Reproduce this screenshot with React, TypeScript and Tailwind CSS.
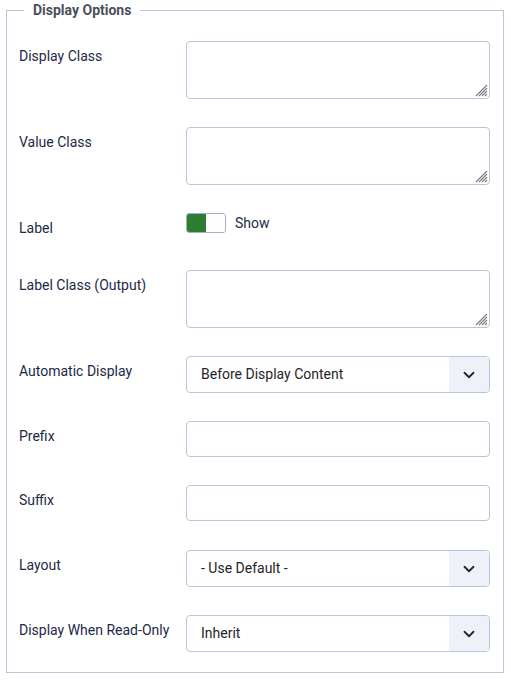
import { ChevronDown } from 'lucide-react';

const labelCls = 'w-[167px] shrink-0 pt-[5px] text-[14px] leading-[21px] text-[#1c2a47]';
const boxCls = 'w-[304px] rounded-[4px] border border-[#b8c6dd] bg-white';

function TextRow({ label }: { label: string }) {
  return (
    <div className="flex">
      <div className={labelCls}>{label}</div>
      <div className="relative">
        <textarea className={`${boxCls} block h-[58px] resize-none outline-none`} />
        {/* resize grip */}
        <svg className="pointer-events-none absolute bottom-[2px] right-[2px]" width="13" height="13" viewBox="0 0 13 13">
          <g stroke="#7a7a7a" strokeWidth="1.1">
            <line x1="12" y1="1" x2="1" y2="12" />
            <line x1="12" y1="4" x2="4" y2="12" />
            <line x1="12" y1="7" x2="7" y2="12" />
            <line x1="12" y1="10" x2="10" y2="12" />
          </g>
        </svg>
      </div>
    </div>
  );
}

function InputRow({ label }: { label: string }) {
  return (
    <div className="flex">
      <div className={labelCls}>{label}</div>
      <input className={`${boxCls} h-[36px] outline-none`} />
    </div>
  );
}

function SelectRow({ label, value }: { label: string; value: string }) {
  return (
    <div className="flex">
      <div className={labelCls}>{label}</div>
      <div className={`${boxCls} flex h-[37px] overflow-hidden`}>
        <div className="flex flex-1 items-center pl-[14px] text-[14px] text-[#22252a]">{value}</div>
        <div className="flex w-[40px] items-center justify-center bg-[#eef2f8]">
          <ChevronDown size={18} strokeWidth={2.4} className="text-[#22252a]" />
        </div>
      </div>
    </div>
  );
}

export default function App() {
  return (
    <div className="min-h-screen bg-white font-['Roboto',sans-serif]">
      <fieldset className="ml-[6px] mr-[7px] border border-[#b8c6dd] pb-[20px] pl-[12px] pr-[12px] pt-[21px]">
        <legend className="ml-[5px] px-[9px] text-[14px] font-bold leading-[20px] text-[#4a5059]">
          Display Options
        </legend>
        <div className="flex flex-col gap-[28px]">
          <TextRow label="Display Class" />
          <TextRow label="Value Class" />

          <div className="flex h-[29px]">
            <div className={labelCls}>Label</div>
            <div className="flex items-start gap-[9px]">
              <div className="flex h-[20px] w-[40px] overflow-hidden rounded-[3px] border border-[#9fb0c6]">
                <div className="w-1/2 bg-[#2e7d32]" />
                <div className="w-1/2 bg-white" />
              </div>
              <span className="text-[14px] leading-[20px] text-[#1c2a47]">Show</span>
            </div>
          </div>

          <TextRow label="Label Class (Output)" />
          <SelectRow label="Automatic Display" value="Before Display Content" />
          <InputRow label="Prefix" />
          <InputRow label="Suffix" />
          <div className="mt-[1px]">
            <SelectRow label="Layout" value="- Use Default -" />
          </div>
          <SelectRow label="Display When Read-Only" value="Inherit" />
        </div>
      </fieldset>
    </div>
  );
}
